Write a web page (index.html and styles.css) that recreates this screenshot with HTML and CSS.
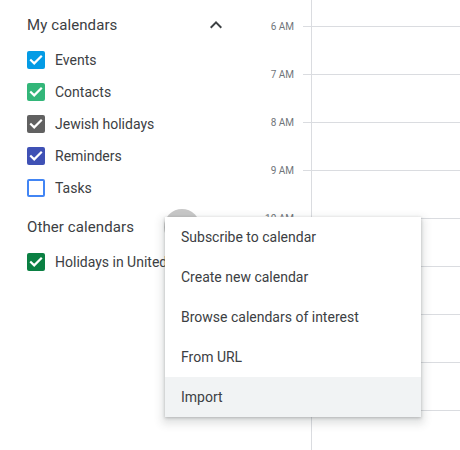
FILE: index.html
```html
<!DOCTYPE html>
<html>
<head>
<meta charset="utf-8">
<link rel="stylesheet" href="styles.css">
</head>
<body>
<div class="app">
  <aside class="sidebar">
    <section class="section">
      <div class="sec-head">
        <span class="sec-title">My calendars</span>
        <svg class="chev" width="24" height="24" viewBox="0 0 24 24"><path d="M7.41 15.41L12 10.83l4.59 4.58L18 14l-6-6-6 6z" fill="#3c4043"/></svg>
      </div>
      <div class="cal"><span class="cb blue"><svg viewBox="0 0 18 18"><path d="M4 9.2l3.2 3.2L14 5.6" /></svg></span><span class="lbl">Events</span></div>
      <div class="cal"><span class="cb green"><svg viewBox="0 0 18 18"><path d="M4 9.2l3.2 3.2L14 5.6" /></svg></span><span class="lbl">Contacts</span></div>
      <div class="cal"><span class="cb gray"><svg viewBox="0 0 18 18"><path d="M4 9.2l3.2 3.2L14 5.6" /></svg></span><span class="lbl">Jewish holidays</span></div>
      <div class="cal"><span class="cb indigo"><svg viewBox="0 0 18 18"><path d="M4 9.2l3.2 3.2L14 5.6" /></svg></span><span class="lbl">Reminders</span></div>
      <div class="cal"><span class="cb empty"></span><span class="lbl">Tasks</span></div>
    </section>
    <section class="section">
      <div class="sec-head">
        <span class="sec-title">Other calendars</span>
        <span class="add-btn"></span>
      </div>
      <div class="cal"><span class="cb dkgreen"><svg viewBox="0 0 18 18"><path d="M4 9.2l3.2 3.2L14 5.6" /></svg></span><span class="lbl">Holidays in United States</span></div>
    </section>
  </aside>
  <div class="gutter">
    <div class="hour">6 AM</div>
    <div class="hour">7 AM</div>
    <div class="hour">8 AM</div>
    <div class="hour">9 AM</div>
    <div class="hour">10 AM</div>
  </div>
  <div class="ticks">
    <div class="row"></div><div class="row"></div><div class="row"></div><div class="row"></div><div class="row"></div><div class="row"></div><div class="row"></div><div class="row"></div><div class="row"></div>
  </div>
  <div class="day">
    <div class="row"></div><div class="row"></div><div class="row"></div><div class="row"></div><div class="row"></div><div class="row"></div><div class="row"></div><div class="row"></div><div class="row"></div>
  </div>
  <ul class="menu">
    <li>Subscribe to calendar</li>
    <li>Create new calendar</li>
    <li>Browse calendars of interest</li>
    <li>From URL</li>
    <li class="active">Import</li>
  </ul>
</div>
</body>
</html>
```
FILE: styles.css
```css
* { box-sizing: border-box; }
html, body { margin: 0; padding: 0; background: #fff; }
body { font-family: Roboto, "Liberation Sans", sans-serif; color: #3c4043; }
.app { position: relative; display: flex; width: 460px; height: 450px; overflow: hidden; }
.sidebar { width: 256px; flex: none; padding-top: 6px; }
.section { display: flex; flex-direction: column; }
.section + .section { margin-top: 4px; }
.sec-head { height: 38px; display: flex; align-items: center; justify-content: space-between; padding-left: 27px; padding-right: 28px; position: relative; }
.sec-title { font-size: 15px; color: #3c4043; letter-spacing: 0.1px; }
.chev { display: block; }
.add-btn { position: absolute; left: 164px; top: 1px; width: 36px; height: 36px; border-radius: 50%; background: #c8c8c8; }
.cal { height: 32px; display: flex; align-items: center; padding-left: 27px; white-space: nowrap; }
.cb { width: 18px; height: 18px; border-radius: 2px; flex: none; display: flex; align-items: center; justify-content: center; margin-right: 10px; }
.cb svg { width: 18px; height: 18px; }
.cb svg path { fill: none; stroke: #fff; stroke-width: 2.2; stroke-linecap: square; }
.blue { background: #039be5; }
.green { background: #33b679; }
.gray { background: #616161; }
.indigo { background: #3f51b5; }
.dkgreen { background: #0b8043; }
.empty { border: 2px solid #4285f4; }
.lbl { font-size: 14px; color: #3c4043; }
.gutter { width: 47px; flex: none; padding-top: 2px; }
.hour { height: 48px; display: flex; align-items: center; justify-content: flex-end; padding-right: 9px; font-size: 10px; color: #70757a; white-space: nowrap; }
.ticks { width: 8px; flex: none; padding-top: 26px; }
.day { flex: 1; padding-top: 26px; border-left: 1px solid #dadce0; }
.row { height: 48px; border-top: 1px solid #dadce0; }
.menu { position: absolute; left: 165px; top: 217px; width: 256px; margin: 0; padding: 0; list-style: none; background: #fff; box-shadow: 0 4px 8px 3px rgba(60,64,67,0.15), 0 1px 3px rgba(60,64,67,0.3); }
.menu li { height: 40px; display: flex; align-items: center; padding-left: 16px; font-size: 14px; color: #3c4043; }
.menu li.active { background: #f1f3f4; }
```
